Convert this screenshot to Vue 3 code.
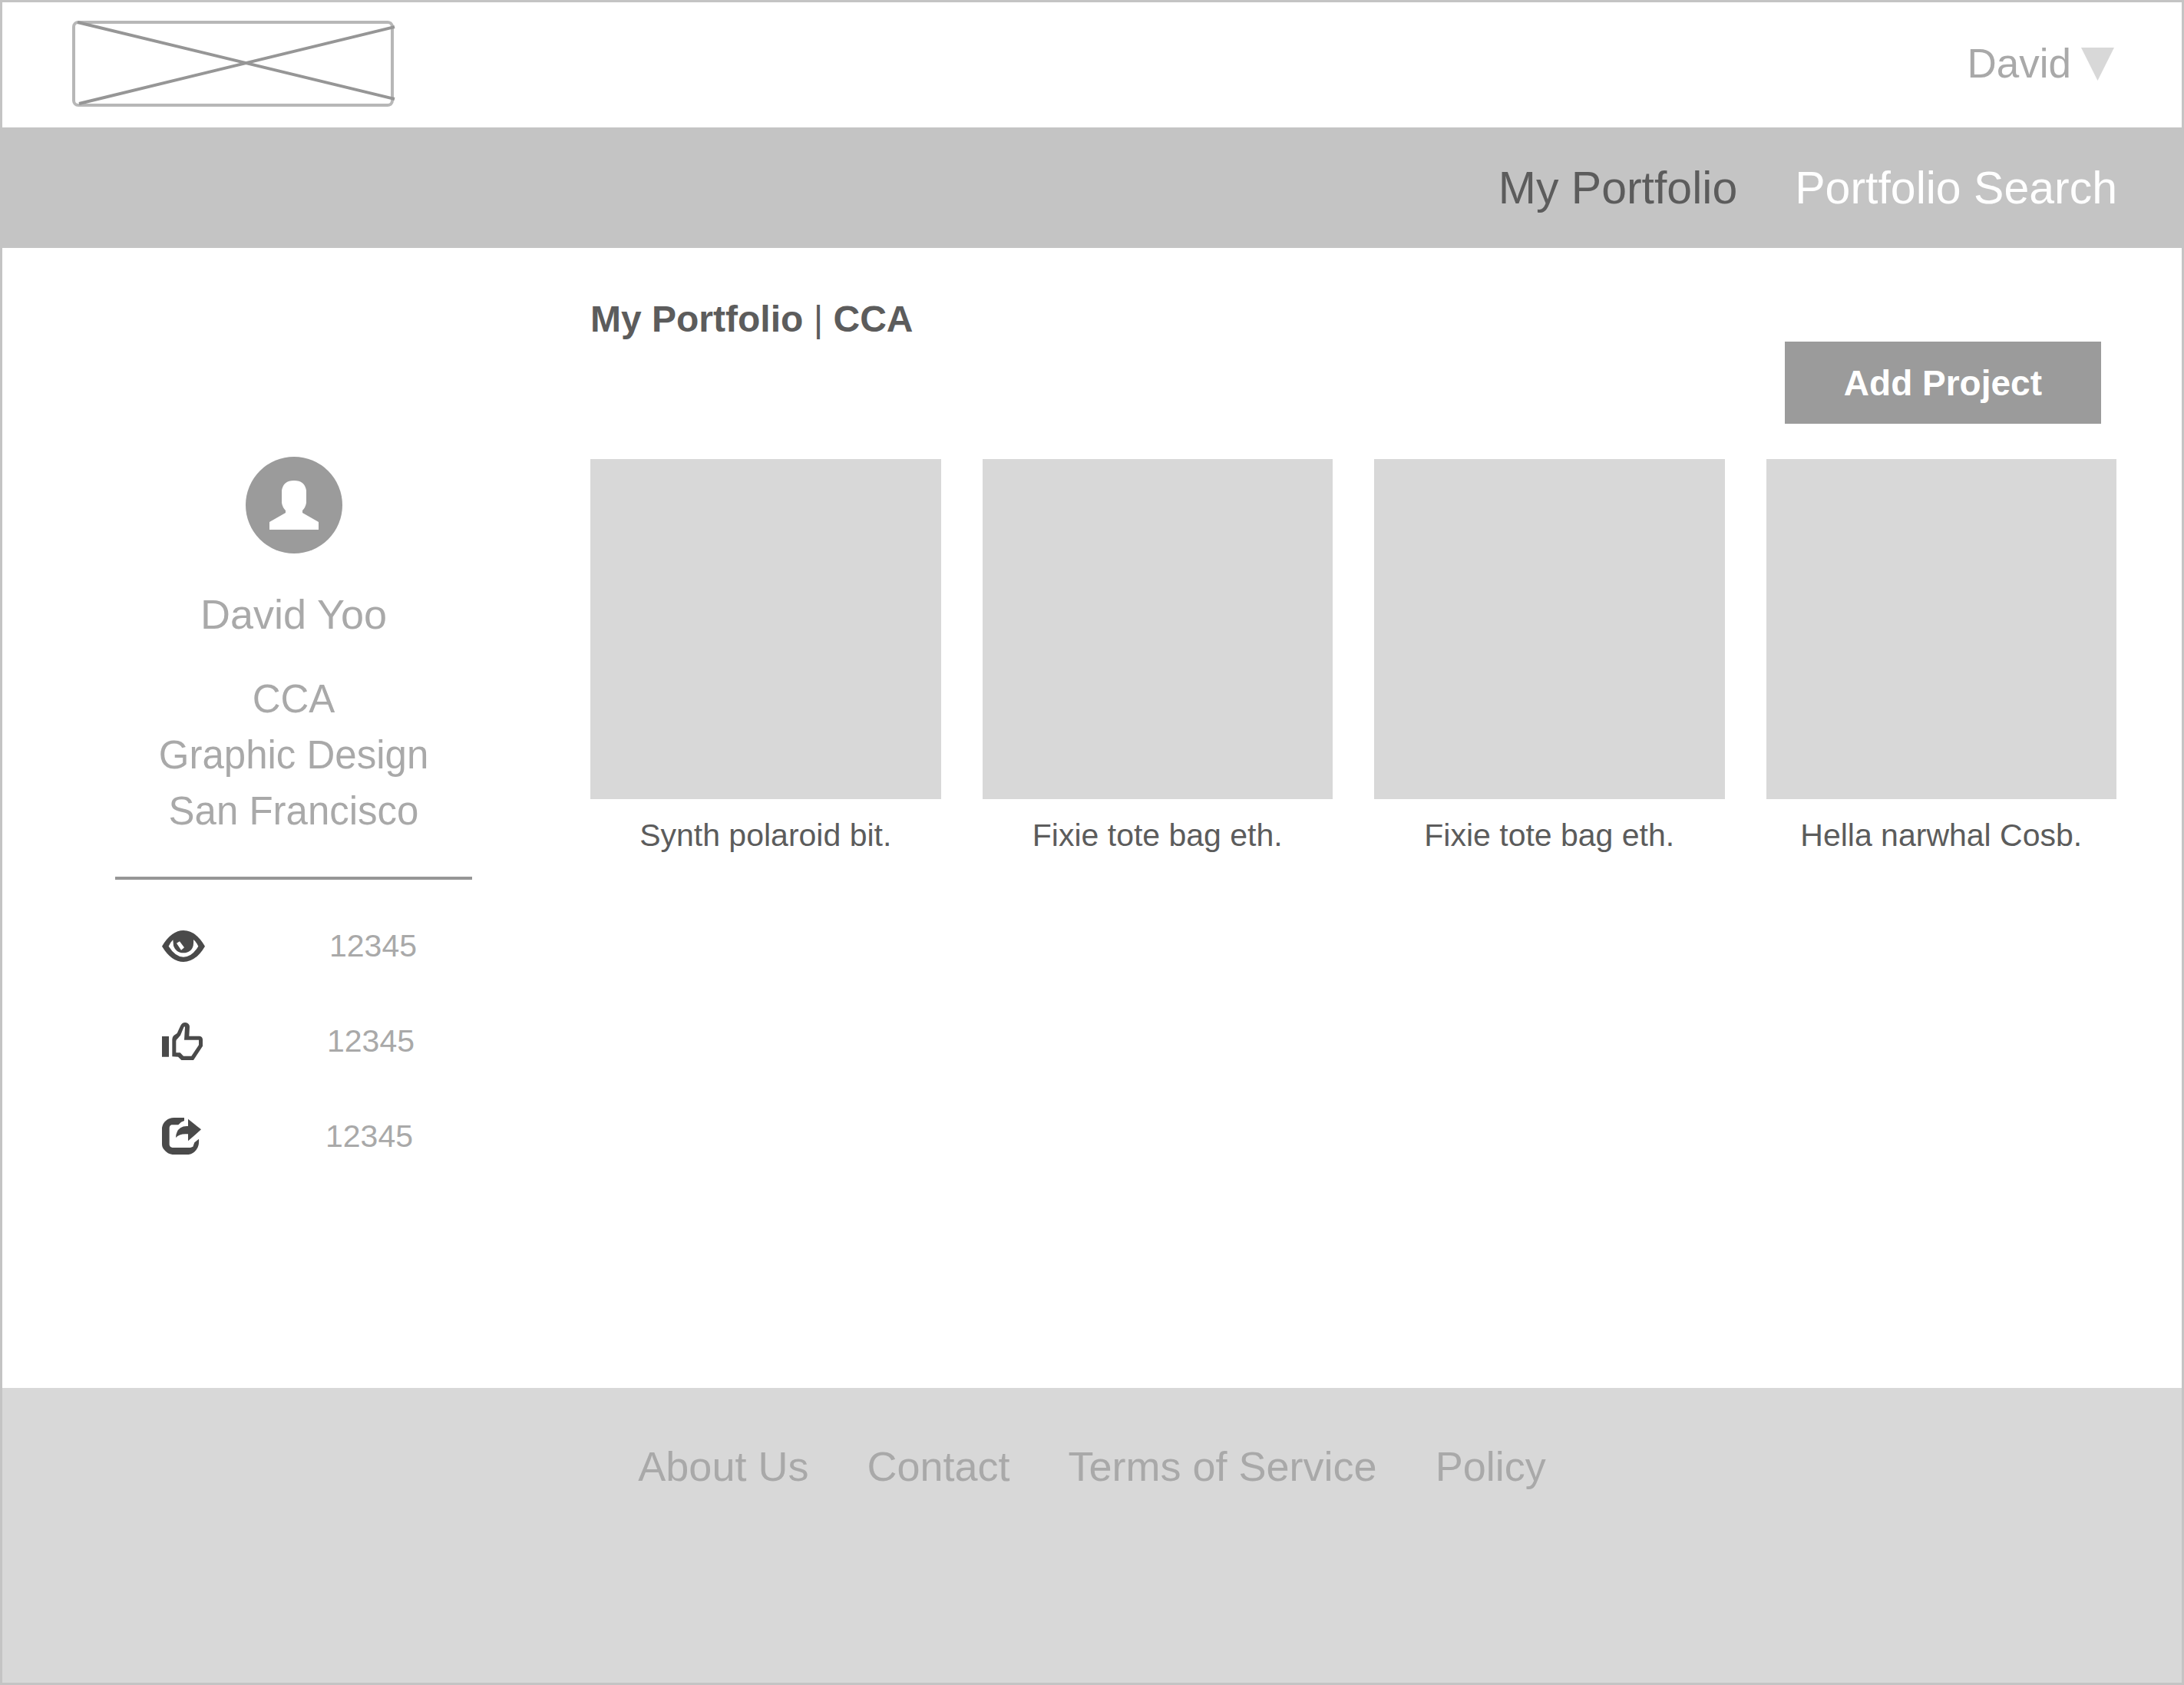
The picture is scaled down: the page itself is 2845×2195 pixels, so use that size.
<script setup>
const navLinks = [
  { label: 'My Portfolio', current: true },
  { label: 'Portfolio Search', current: false },
]

const details = ['CCA', 'Graphic Design', 'San Francisco']

const stats = [
  {
    name: 'Views',
    value: '12345',
    width: 56,
    height: 41,
    viewBox: '93 93 168 123',
    path: 'M93 155Q130 93 177 93Q225 93 261 155Q225 216 177 216Q130 216 93 155ZM136 130Q124 142 119 155Q146 197 177 197Q210 197 235 155Q230 141 216 129Q217 140 215 153C210 172 195 181 177 181C158 181 144 171 138 153ZM150 143L162 136L180 160L168 170Z',
  },
  {
    name: 'Likes',
    value: '12345',
    width: 53,
    height: 49,
    viewBox: '33 27 159 147',
    path: 'M33 81H60V161H33ZM73 160V92Q73 84 79 78L92 69L104 43Q110 27 124 27Q140 29 141 43L139 80H180Q192 82 192 94V119L156 174H109L96 161ZM88 145V100Q88 94 94 90L105 77L118 46Q121 41 123 44L120 95H177V115L148 158H117L104 145Z',
  },
  {
    name: 'Shares',
    value: '12345',
    width: 51,
    height: 48,
    viewBox: '33 33 153 144',
    path: 'M80 33H120V45L108 50L97 61H70Q62 64 62 74V138Q63 149 74 150H144L154 146L160 130L177 116Q179 142 169 155Q158 174 137 177H74Q55 175 43 160Q33 150 33 136V72Q36 54 49 44Q62 33 80 33ZM135 38L186 79L135 124V97Q101 94 87 111Q88 85 105 73Q118 64 135 66Z',
  },
]

const projects = [
  'Synth polaroid bit.',
  'Fixie tote bag eth.',
  'Fixie tote bag eth.',
  'Hella narwhal Cosb.',
]

const footerLinks = ['About Us', 'Contact', 'Terms of Service', 'Policy']
</script>

<template>
  <div class="page">
    <header class="topbar">
      <a class="logo" href="#" aria-label="Home">
        <svg width="422" height="114" viewBox="0 0 422 114" fill="none" aria-hidden="true">
          <rect x="2" y="3" width="415" height="108" rx="6" stroke="#b7b7b7" stroke-width="4" />
          <path d="M7 3L420 103M9 109L420 9" stroke="#969696" stroke-width="4" />
        </svg>
      </a>
      <button class="account" type="button" aria-haspopup="menu">
        <span>David</span>
        <svg width="43" height="43" viewBox="0 0 43 43" aria-hidden="true">
          <path d="M0 0H43L21.5 43Z" fill="#d8d8d8" />
        </svg>
      </button>
    </header>

    <nav class="nav" aria-label="Main">
      <a
        v-for="link in navLinks"
        :key="link.label"
        href="#"
        class="nav-link"
        :class="{ current: link.current }"
      >{{ link.label }}</a>
    </nav>

    <div class="body">
      <aside class="profile">
        <svg class="avatar" width="126" height="126" viewBox="0 0 126 126" aria-hidden="true">
          <circle cx="63" cy="63" r="63" fill="#9b9b9b" />
          <path
            d="M47 44Q49 31 63 31Q77 31 79 44V60Q78 66 74 70V73L95 85V95H31V85L52 73V70Q48 66 47 60Z"
            fill="#fff"
          />
        </svg>
        <h2 class="name">David Yoo</h2>
        <ul class="details">
          <li v-for="line in details" :key="line">{{ line }}</li>
        </ul>
        <hr class="rule" />
        <ul class="stats">
          <li v-for="stat in stats" :key="stat.name" class="stat">
            <svg
              :width="stat.width"
              :height="stat.height"
              :viewBox="stat.viewBox"
              role="img"
              :aria-label="stat.name"
            >
              <path :d="stat.path" fill="#4a4a4a" fill-rule="evenodd" />
            </svg>
            <span>{{ stat.value }}</span>
          </li>
        </ul>
      </aside>

      <main class="content">
        <h1 class="title">My Portfolio <span class="bar">|</span> CCA</h1>
        <button class="add" type="button">Add Project</button>
        <ul class="projects">
          <li v-for="(project, index) in projects" :key="index">
            <div class="thumb"></div>
            <p class="caption">{{ project }}</p>
          </li>
        </ul>
      </main>
    </div>

    <footer class="footer">
      <a v-for="link in footerLinks" :key="link" href="#">{{ link }}</a>
    </footer>
  </div>
</template>

<style>
body {
  margin: 0;
  background: #fff;
}
</style>

<style scoped>
.page {
  box-sizing: border-box;
  min-height: 100vh;
  display: flex;
  flex-direction: column;
  border: 3px solid #c4c4c4;
  font-family: "Liberation Sans", Arial, sans-serif;
  color: #a9a9a9;
}

a {
  color: inherit;
  text-decoration: none;
}

ul {
  margin: 0;
  padding: 0;
  list-style: none;
}

.topbar {
  display: flex;
  align-items: center;
  justify-content: space-between;
  padding: 23px 88px 26px 91px;
}

.logo,
.logo svg {
  display: block;
}

.account {
  display: flex;
  align-items: center;
  gap: 13px;
  padding: 0;
  border: 0;
  background: none;
  font: inherit;
  font-size: 53px;
  line-height: 62px;
  color: #a9a9a9;
}

.nav {
  display: flex;
  justify-content: flex-end;
  gap: 75px;
  padding: 46px 84px 45px;
  background: #c4c4c4;
  font-size: 59px;
  line-height: 66px;
  color: #fff;
}

.nav-link.current {
  color: #5c5c5c;
}

.body {
  display: grid;
  grid-template-columns: 465px minmax(0, 1fr);
  column-gap: 154px;
  padding: 64px 85px 296px 147px;
}

.profile {
  display: flex;
  flex-direction: column;
  padding-top: 208px;
}

.avatar {
  align-self: center;
}

.name {
  margin: 47px 0 42px;
  font-size: 54px;
  font-weight: 400;
  line-height: 64px;
  text-align: center;
}

.details {
  font-size: 51px;
  line-height: 73px;
  text-align: center;
}

.rule {
  width: 100%;
  height: 4px;
  margin: 49px 0 54px;
  border: 0;
  background: #969696;
}

.stats {
  display: flex;
  flex-direction: column;
  gap: 60px;
  padding-left: 61px;
}

.stat {
  display: flex;
  align-items: center;
  gap: 162px;
  height: 64px;
  font-size: 41px;
  line-height: 48px;
}

.content {
  display: flex;
  flex-direction: column;
}

.title {
  margin: 0;
  font-size: 48px;
  line-height: 58px;
  color: #5c5c5c;
}

.bar {
  font-weight: 400;
}

.add {
  align-self: flex-end;
  margin: 0 20px 46px 0;
  padding: 27px 77px 26px;
  border: 0;
  background: #9b9b9b;
  font: inherit;
  font-size: 46px;
  font-weight: 700;
  line-height: 54px;
  color: #fff;
}

.projects {
  display: grid;
  grid-template-columns: repeat(4, minmax(0, 1fr));
  gap: 54px;
}

.thumb {
  aspect-ratio: 457 / 443;
  background: #d8d8d8;
}

.caption {
  margin: 23px 0 0;
  font-size: 41px;
  line-height: 48px;
  text-align: center;
  color: #5c5c5c;
}

.footer {
  flex: 1;
  display: flex;
  justify-content: center;
  align-items: flex-start;
  gap: 76px;
  padding: 71px 88px;
  background: #d8d8d8;
  font-size: 54px;
  line-height: 62px;
}
</style>
